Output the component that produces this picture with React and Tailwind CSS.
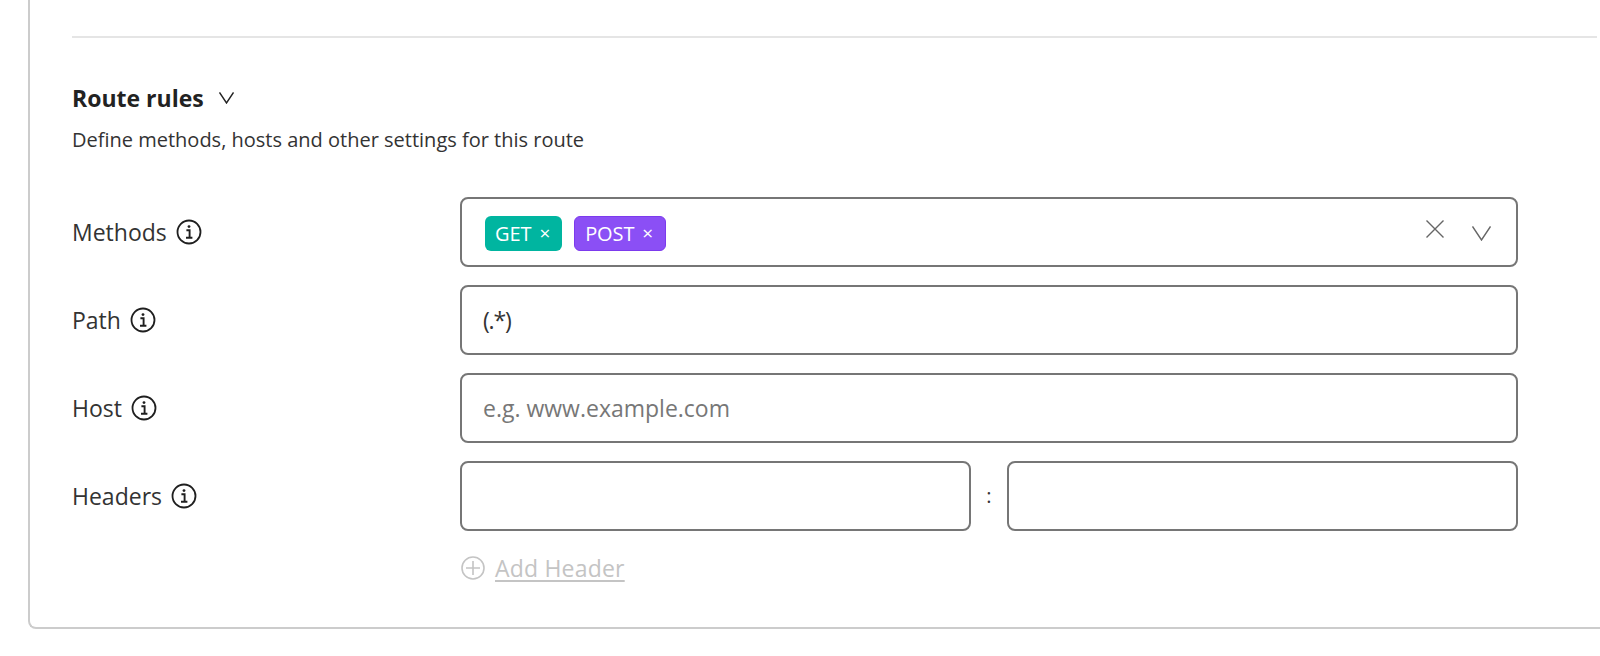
import { useState } from "react"

const font = { fontFamily: "'Open Sans', 'Noto Sans', sans-serif" }

function InfoIcon() {
  return (
    <svg width="26" height="26" viewBox="0 0 26 26" fill="none" stroke="#1f1f1f" className="shrink-0">
      <circle cx="13" cy="13" r="11.5" strokeWidth="1.8" />
      <circle cx="13" cy="7.6" r="1.4" fill="#1f1f1f" stroke="none" />
      <path d="M10.4 11.3h3.2v7.2M10 18.7h6.4" strokeWidth="1.9" />
    </svg>
  )
}

function Chevron({ width, height, color, className }) {
  return (
    <svg width={width} height={height} viewBox={`0 0 ${width} ${height}`} fill="none" stroke={color} strokeWidth="1.4" className={className}>
      <path d={`M0.5 0.5 ${width / 2} ${height - 1} ${width - 0.5} 0.5`} />
    </svg>
  )
}

function Tag({ label, className }) {
  return (
    <span className={`flex h-[35px] items-center rounded-md pl-[10px] pr-[12px] text-[20px] tracking-[-0.1px] text-white ${className}`}>
      {label}
      <span className="ml-[8px] text-[19px]">×</span>
    </span>
  )
}

function Row({ label, children }) {
  return (
    <div className="flex items-center">
      <div className="flex w-[388px] shrink-0 items-center gap-[9px] text-[23px] text-[#333]">
        {label}
        <InfoIcon />
      </div>
      <div className="flex-1">{children}</div>
    </div>
  )
}

const fieldClass =
  "h-[70px] w-full rounded-lg border-2 border-[#767676] bg-white px-[21px] text-[23px] text-[#333] outline-none placeholder:text-[#777]"

export default function App() {
  const [path, setPath] = useState("(.*)")

  return (
    <div className="h-[656px] overflow-hidden bg-white" style={font}>
      <div className="ml-[28px] h-[629px] rounded-bl-lg border-b-2 border-l-2 border-[#cccccc] pl-[42px] pr-[3px] pt-[36px]">
        <div className="h-[2px] bg-[#e5e5e5]" />

        {/* Route rules */}
        <div className="mt-[43px] flex h-[34px] items-center gap-[15px]">
          <h2 className="text-[23px] font-bold text-[#222]">Route rules</h2>
          <Chevron width={15} height={12} color="#222" className="mb-[1px]" />
        </div>
        <p className="mt-[10px] text-[20px] text-[#333]">
          Define methods, hosts and other settings for this route
        </p>

        <div className="mr-[79px] mt-[42px] flex flex-col gap-[18px]">
          <Row label="Methods">
            <div className="flex h-[70px] items-center rounded-lg border-2 border-[#767676] pl-[23px] pr-[25px]">
              <div className="mt-[3px] flex flex-1 gap-3">
                <Tag label="GET" className="bg-[#00b5a0]" />
                <Tag label="POST" className="border border-[#7c3aed] bg-[#8b4ff5]" />
              </div>
              <svg width="18" height="18" viewBox="0 0 18 18" fill="none" stroke="#666" strokeWidth="1.4" className="mb-[6px] mr-[28px]">
                <path d="M0.5 0.5 17.5 17.5M17.5 0.5 0.5 17.5" />
              </svg>
              <Chevron width={19} height={15} color="#666" className="mt-[3px]" />
            </div>
          </Row>
          <Row label="Path">
            <input className={`${fieldClass} tracking-[-1.2px]`} value={path} onChange={(e) => setPath(e.target.value)} />
          </Row>
          <Row label="Host">
            <input className={fieldClass} placeholder="e.g. www.example.com" />
          </Row>
          <Row label="Headers">
            <div className="flex items-center">
              <input className={`${fieldClass} flex-1`} />
              <span className="w-9 shrink-0 text-center text-[20px] text-[#333]">:</span>
              <input className={`${fieldClass} flex-1`} />
            </div>
          </Row>
        </div>

        {/* Add header */}
        <div className="ml-[389px] mt-[20px] flex items-center gap-[10px] text-[23px] tracking-[0.2px] text-[#c4c4c4]">
          <svg width="24" height="24" viewBox="0 0 24 24" fill="none" stroke="#c4c4c4" strokeWidth="1.6">
            <circle cx="12" cy="12" r="11" />
            <path d="M12 5v14M5 12h14" />
          </svg>
          <span className="underline underline-offset-3">Add Header</span>
        </div>
      </div>
    </div>
  )
}
